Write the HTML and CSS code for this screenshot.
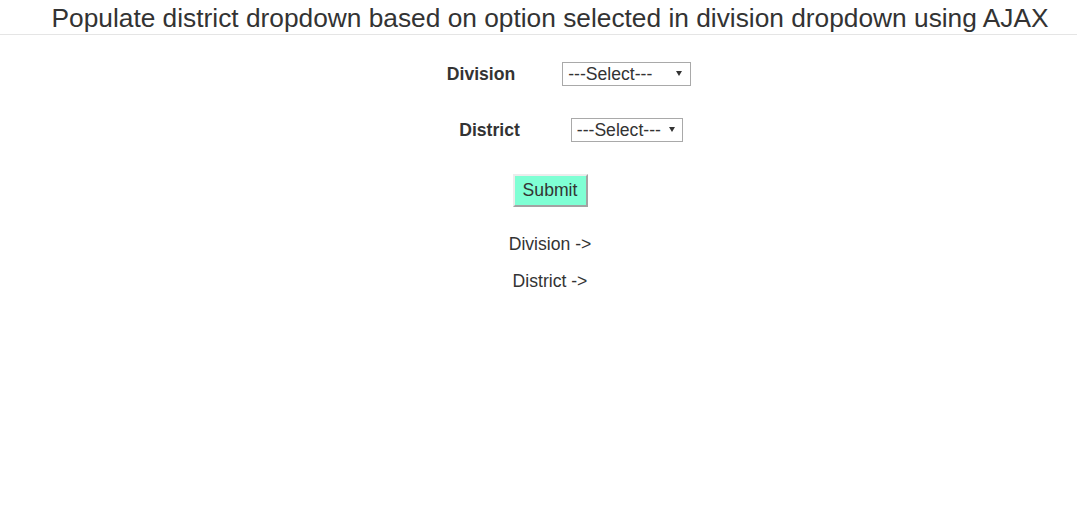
FILE: index.html
```html
<!DOCTYPE html>
<html lang="en">
<head>
<meta charset="utf-8">
<title>Populate district dropdown</title>
<link rel="stylesheet" href="styles.css">
</head>
<body>
<header class="page-header">
  <h1 class="page-title">Populate district dropdown based on option selected in division dropdown using AJAX</h1>
</header>
<main class="content">
  <form class="ajax-form">
    <div class="field field-division">
      <label class="field-label" for="division">Division</label>
      <span class="select-wrap select-division">
        <select class="field-select" id="division"><option>---Select---</option></select>
        <svg class="select-arrow" width="6" height="5" viewBox="0 0 6 5"><path d="M0 0H6L3 5Z" fill="#333"/></svg>
      </span>
    </div>
    <div class="field field-district">
      <label class="field-label" for="district">District</label>
      <span class="select-wrap select-district">
        <select class="field-select" id="district"><option>---Select---</option></select>
        <svg class="select-arrow" width="6" height="5" viewBox="0 0 6 5"><path d="M0 0H6L3 5Z" fill="#333"/></svg>
      </span>
    </div>
    <div class="actions">
      <button type="button" class="submit-btn">Submit</button>
    </div>
  </form>
  <p class="result result-first">Division -&gt;</p>
  <p class="result">District -&gt;</p>
</main>
</body>
</html>
```
FILE: styles.css
```css
html, body {
  margin: 0;
  padding: 0;
  background: #fff;
}
body {
  font-family: "Liberation Sans", Arial, sans-serif;
  color: #333;
}
.page-header {
  padding-left: 23px;
  text-align: center;
  border-bottom: 1px solid #e5e5e5;
}
.page-title {
  margin: 3px 0 1px;
  font-size: 26.3px;
  line-height: 30px;
  font-weight: normal;
  color: #333;
  white-space: nowrap;
}
.content {
  padding-left: 23px;
  text-align: center;
}
.ajax-form {
  margin: 27px 0 0;
  display: flex;
  flex-direction: column;
  gap: 32px;
}
.field {
  display: flex;
  justify-content: center;
  align-items: center;
  height: 24px;
}
.field-division {
  gap: 47px;
  padding-left: 38px;
}
.field-district {
  gap: 51px;
  padding-left: 42px;
}
.field-label {
  font-size: 17.6px;
  font-weight: bold;
  line-height: 20px;
  color: #333;
}
.select-wrap {
  position: relative;
  display: block;
  height: 24px;
}
.select-division { width: 129px; }
.select-district { width: 112px; }
.field-select {
  appearance: none;
  -webkit-appearance: none;
  box-sizing: border-box;
  width: 100%;
  height: 24px;
  margin: 0;
  padding: 0 0 0 5px;
  border: 1px solid #a9a9a9;
  border-radius: 0;
  background: #fff;
  font-family: "Liberation Sans", Arial, sans-serif;
  font-size: 17.6px;
  line-height: 22px;
  color: #333;
  outline: none;
}
.select-arrow {
  position: absolute;
  top: 9px;
  pointer-events: none;
}
.select-division .select-arrow { right: 9px; }
.select-district .select-arrow { right: 8px; }
.actions {
  display: flex;
  justify-content: center;
}
.submit-btn {
  box-sizing: border-box;
  height: 33px;
  width: 75px;
  margin: 0;
  padding: 0 0 1px;
  border-style: solid;
  border-width: 2px;
  border-color: #ececec #a3a3a3 #a3a3a3 #ececec;
  border-radius: 0;
  background: #7fffd4;
  font-family: "Liberation Sans", Arial, sans-serif;
  font-size: 17.6px;
  line-height: 20px;
  color: #333;
}
.result {
  margin: 17px 0 0;
  font-size: 17.6px;
  line-height: 20px;
  color: #333;
}
.result-first {
  margin-top: 27px;
}
```
